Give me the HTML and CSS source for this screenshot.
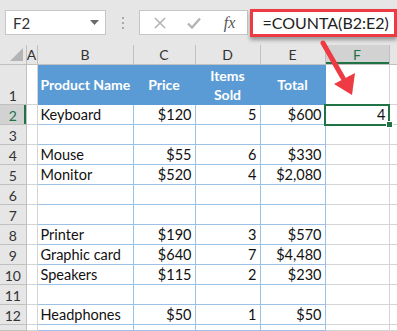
FILE: index.html
```html
<!DOCTYPE html>
<html lang="en">
<head>
	<meta charset="UTF-8" />
	<title>COUNTA example</title>
	<link rel="stylesheet" href="styles.css">
</head>
<body>
	<div class="bar">
		<div class="namebox">
			<span>F2</span>
			<svg class="caret" width="9" height="5" viewBox="0 0 9 5"><path d="M0 0h9L4.5 5z" fill="#6a6a6a"/></svg>
		</div>
		<svg class="dots" width="4" height="12" viewBox="0 0 4 12">
			<rect x="1" y="0" width="2" height="2" fill="#a8a8a8"/>
			<rect x="1" y="5" width="2" height="2" fill="#a8a8a8"/>
			<rect x="1" y="10" width="2" height="2" fill="#a8a8a8"/>
		</svg>
		<div class="fbtns">
			<svg width="12" height="12" viewBox="0 0 12 12"><path d="M1 1L11 11M11 1L1 11" stroke="#b4b4b4" stroke-width="1.6"/></svg>
			<svg width="14" height="12" viewBox="0 0 14 12"><path d="M1 6.5L5 10.5L13 1.5" stroke="#b4b4b4" stroke-width="2.4" fill="none"/></svg>
			<span class="fx">fx</span>
		</div>
		<div class="formula">=COUNTA(B2:E2)</div>
	</div>

	<table class="sheet">
		<colgroup>
			<col class="c-rh"><col class="c-a"><col class="c-b"><col class="c-c">
			<col class="c-d"><col class="c-e"><col class="c-f"><col class="c-g">
		</colgroup>
		<tr class="colhead">
			<th class="corner"><span class="tri"></span></th>
			<th>A</th><th>B</th><th>C</th><th>D</th><th>E</th><th class="sel">F</th><th></th>
		</tr>
		<tr class="r1">
			<th class="rh">1</th><td></td>
			<td class="hd">Product Name</td><td class="hd">Price</td><td class="hd">Items<br>Sold</td><td class="hd">Total</td>
			<td></td><td></td>
		</tr>
		<tr>
			<th class="rh sel">2</th><td></td>
			<td class="t">Keyboard</td><td class="t n">$120</td><td class="t n">5</td><td class="t n">$600</td>
			<td class="n active">4<span class="handle"></span></td><td></td>
		</tr>
		<tr>
			<th class="rh">3</th><td></td>
			<td class="t"></td><td class="t"></td><td class="t"></td><td class="t"></td><td></td><td></td>
		</tr>
		<tr>
			<th class="rh">4</th><td></td>
			<td class="t">Mouse</td><td class="t n">$55</td><td class="t n">6</td><td class="t n">$330</td><td></td><td></td>
		</tr>
		<tr>
			<th class="rh">5</th><td></td>
			<td class="t">Monitor</td><td class="t n">$520</td><td class="t n">4</td><td class="t n">$2,080</td><td></td><td></td>
		</tr>
		<tr>
			<th class="rh">6</th><td></td>
			<td class="t"></td><td class="t"></td><td class="t"></td><td class="t"></td><td></td><td></td>
		</tr>
		<tr>
			<th class="rh">7</th><td></td>
			<td class="t"></td><td class="t"></td><td class="t"></td><td class="t"></td><td></td><td></td>
		</tr>
		<tr>
			<th class="rh">8</th><td></td>
			<td class="t">Printer</td><td class="t n">$190</td><td class="t n">3</td><td class="t n">$570</td><td></td><td></td>
		</tr>
		<tr>
			<th class="rh">9</th><td></td>
			<td class="t">Graphic card</td><td class="t n">$640</td><td class="t n">7</td><td class="t n">$4,480</td><td></td><td></td>
		</tr>
		<tr>
			<th class="rh">10</th><td></td>
			<td class="t">Speakers</td><td class="t n">$115</td><td class="t n">2</td><td class="t n">$230</td><td></td><td></td>
		</tr>
		<tr>
			<th class="rh">11</th><td></td>
			<td class="t"></td><td class="t"></td><td class="t"></td><td class="t"></td><td></td><td></td>
		</tr>
		<tr>
			<th class="rh">12</th><td></td>
			<td class="t">Headphones</td><td class="t n">$50</td><td class="t n">1</td><td class="t n">$50</td><td></td><td></td>
		</tr>
		<tr class="last">
			<th class="rh"></th><td></td>
			<td class="t"></td><td class="t"></td><td class="t"></td><td class="t"></td><td></td><td></td>
		</tr>
	</table>

	<!-- annotation arrow -->
	<svg class="arrow" width="40" height="60" viewBox="0 0 40 60">
		<path d="M3 3L23 38" stroke="#ee3a43" stroke-width="5" stroke-linecap="round"/>
		<path d="M14 44L35 33L32 55z" fill="#ee3a43"/>
	</svg>
</body>
</html>
```

FILE: styles.css
```css
body {
	margin: 0;
	background: #e6e6e6;
	font-family: Lato, "Open Sans", sans-serif;
	position: relative;
	overflow: hidden;
	width: 397px;
	height: 331px;
}

/* formula bar */
.bar {
	display: flex;
	align-items: center;
	height: 45px;
	padding-left: 5px;
	box-sizing: border-box;
}

.namebox {
	width: 101px;
	height: 25px;
	box-sizing: border-box;
	background: white;
	border: 1px solid #c6c6c6;
	display: flex;
	align-items: center;
	justify-content: space-between;
	padding: 0 6px 0 7px;
	font-size: 15px;
	color: #333;
}

.caret {
	margin-bottom: 1px;
}

.dots {
	margin-left: 15px;
}

.fbtns {
	margin-left: 14px;
	width: 110px;
	height: 25px;
	box-sizing: border-box;
	background: white;
	border: 1px solid #c6c6c6;
	display: flex;
	align-items: center;
	padding-left: 14px;
	gap: 21px;
}

.fx {
	font-family: "Liberation Serif", serif;
	font-style: italic;
	font-size: 16px;
	color: #555;
	margin-left: 2px;
}

.formula {
	margin-left: 2px;
	width: 147px;
	height: 28px;
	box-sizing: border-box;
	background: white;
	border: 3px solid #ee3a43;
	box-shadow: 0 3px 4px rgba(0, 0, 0, 0.35);
	font-size: 16px;
	color: #222;
	padding-left: 9px;
	line-height: 22px;
	position: relative;
	z-index: 2;
}

/* sheet */
.sheet {
	border-collapse: collapse;
	table-layout: fixed;
	width: 397px;
	background: white;
	font-size: 14.5px;
}

.c-rh { width: 26px; }
.c-a { width: 11px; }
.c-b { width: 96px; }
.c-c { width: 62px; }
.c-d { width: 65px; }
.c-e { width: 65px; }
.c-f { width: 64px; }
.c-g { width: 8px; }

.sheet td,
.sheet th {
	padding: 0 3px;
	height: 19px;
	line-height: 17px;
	border: 1px solid #d4d4d4;
	white-space: nowrap;
	overflow: hidden;
}

.colhead th {
	height: 19px;
	background: #e6e6e6;
	border-color: #c0c0c0;
	border-top: none;
	font-weight: normal;
	color: #333;
	font-size: 14px;
	padding: 0;
}

.colhead th.sel {
	background: #d2d2d2;
	color: #217346;
	box-shadow: inset 0 -2px #217346;
}

.corner {
	position: relative;
	border-left: none !important;
}

.tri {
	position: absolute;
	right: 3px;
	bottom: 3px;
	border-style: solid;
	border-width: 0 0 13px 13px;
	border-color: transparent transparent #b4b4b4 transparent;
}

.rh {
	background: #e6e6e6;
	border-color: #c0c0c0 !important;
	border-left: none !important;
	font-weight: normal;
	color: #333;
	font-size: 14px;
	text-align: center;
	vertical-align: bottom;
	padding: 0 !important;
}

.rh.sel {
	background: #d2d2d2;
	color: #217346;
	box-shadow: inset -2px 0 #217346;
}

.r1 td,
.r1 th {
	height: 39px;
}

.last td,
.last th {
	height: 5px;
}

.hd {
	background: #5b9bd5;
	color: white;
	font-weight: bold;
	font-size: 14px;
	text-align: center;
	line-height: 19px !important;
	border-color: #5b9bd5 !important;
}

.t {
	border-color: #9bc2e6 !important;
	color: #111;
}

.n {
	text-align: right;
}

.active {
	position: relative;
	overflow: visible !important;
	outline: 2px solid #217346;
	outline-offset: -1px;
	color: #111;
}

.handle {
	position: absolute;
	right: -4px;
	bottom: -4px;
	width: 5px;
	height: 5px;
	background: #217346;
	border: 1px solid white;
}

.arrow {
	position: absolute;
	left: 320px;
	top: 40px;
	z-index: 3;
}
```
